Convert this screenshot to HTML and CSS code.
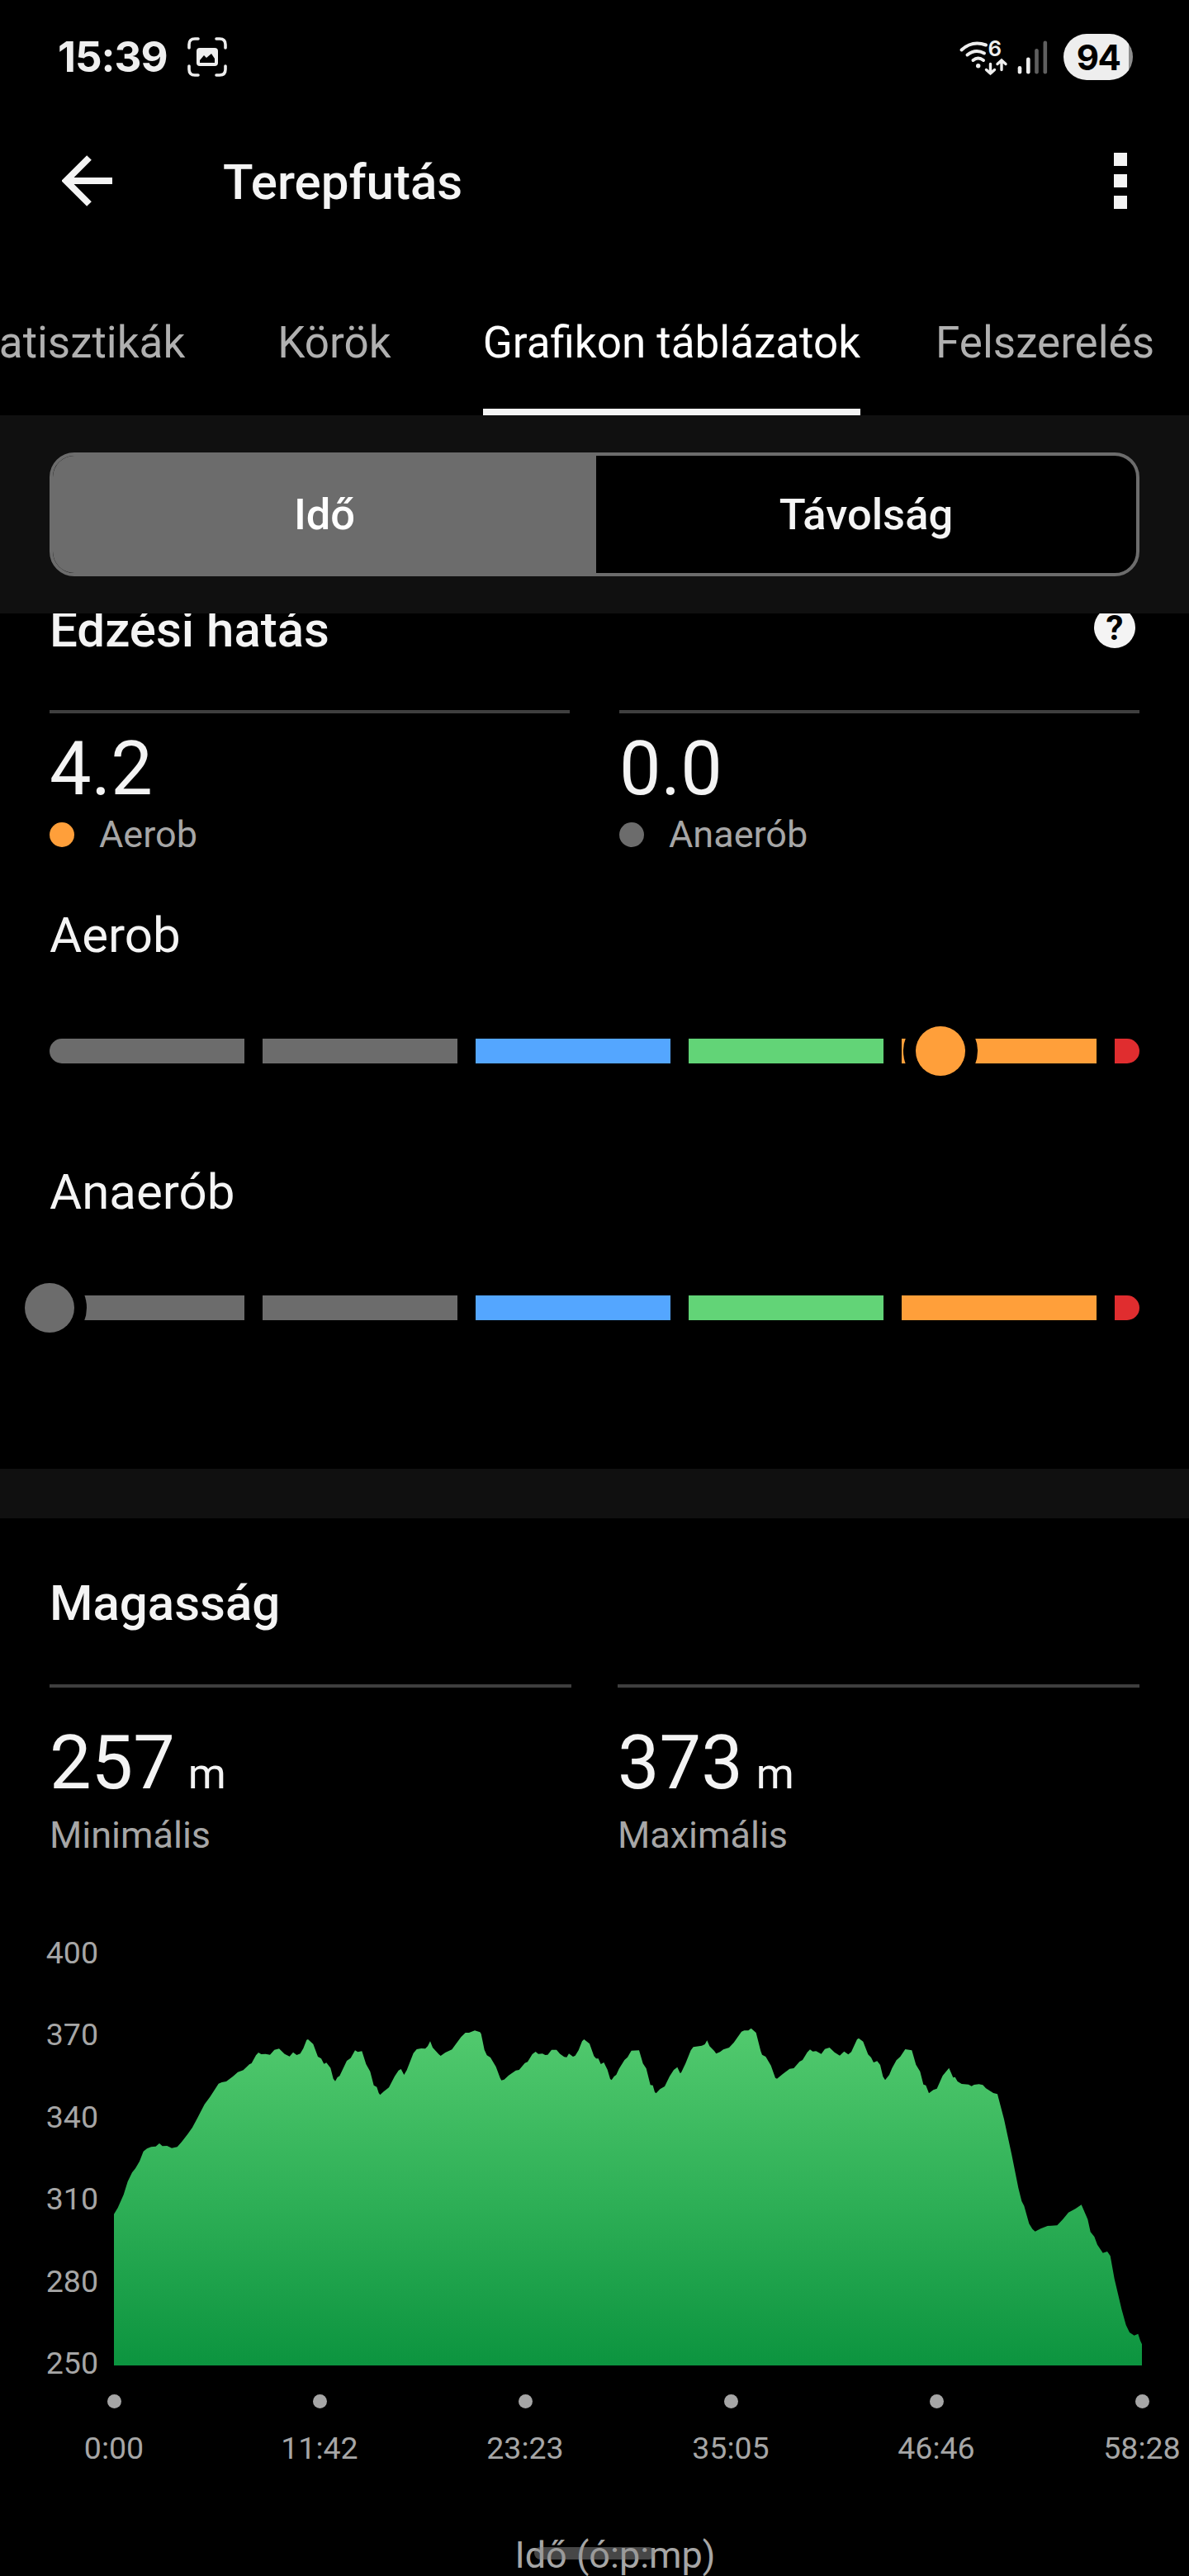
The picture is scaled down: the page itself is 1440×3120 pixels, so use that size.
FILE: index.html
```html
<!doctype html>
<html lang="hu">
  <head>
    <meta charset="UTF-8" />
    <meta name="viewport" content="width=device-width" />
    <title>Terepfutás</title>

    <link rel="stylesheet" href="styles.css">
  </head>

  <body>
    <div class="status-bar">
      <span class="clock">15:39</span>
      <svg class="capture-icon" viewBox="0 0 48 48" aria-hidden="true">
        <path
          d="M2 13V9q0-7 7-7h4M35 2h4q7 0 7 7v4M46 35v4q0 7-7 7h-4M13 46H9q-7 0-7-7v-4"
          fill="none" stroke="currentColor" stroke-width="3.6" stroke-linecap="round"
        />
        <rect x="11" y="13" width="26" height="22" rx="4" fill="currentColor" />
        <path d="M15 31v-3l5-6 3 3 6-5 4 6v5z" fill="#000" />
      </svg>

      <svg class="network-icons" viewBox="0 0 110 56" aria-hidden="true">
        <g fill="none" stroke="currentColor" stroke-width="4" stroke-linecap="round">
          <path d="M4.500 19.500Q17.500 7.500 34 13.500" />
          <path d="M11.500 25.500Q21.500 17.500 32 23.500" />
          <path d="M18.500 32Q24.500 27 31 32" />
          <path d="M39.500 36.500V48M34.500 43.500l5 4.500 5-4.500M53 43.500V33M48 36.500l5-4.500 5 4.500" stroke-width="3.400" />
        </g>
        <circle cx="24.700" cy="38.700" r="2.700" fill="currentColor" />
        <text x="36.500" y="26.500" class="wifi-generation">6</text>
        <g fill="currentColor">
          <rect x="72.700" y="39" width="4.600" height="9.500" rx="2.300" />
          <rect x="83" y="28.500" width="4.600" height="20" rx="2.300" />
          <rect x="93.200" y="18" width="4.600" height="30.500" rx="2.300" opacity=".4" />
          <rect x="103.500" y="8.500" width="4.600" height="40" rx="2.300" opacity=".4" />
        </g>
      </svg>
      <span class="battery">94</span>
    </div>

    <header class="app-bar">
      <svg class="back-icon" viewBox="0 0 62 62" aria-label="Vissza">
        <path
          d="M61 31H6M33 3 5 31l28 28"
          fill="none" stroke="currentColor" stroke-width="8"
        />
      </svg>
      <h1>Terepfutás</h1>
      <svg class="menu-icon" viewBox="0 0 16 68" aria-label="Menü">
        <path d="M0 0h16v16H0zM0 26h16v16H0zM0 52h16v16H0z" fill="currentColor" />
      </svg>
    </header>

    <nav class="tabs">
      <a class="tab">Statisztikák</a>
      <a class="tab">Körök</a>
      <a class="tab tab--active">Grafikon táblázatok</a>
      <a class="tab">Felszerelés</a>
    </nav>

    <div class="switcher">
      <div class="segmented">
        <button class="segment segment--active">Idő</button>
        <button class="segment">Távolság</button>
      </div>
    </div>

    <main>
      <section class="training-effect">
        <div class="section-heading">
          <h2>Edzési hatás</h2>
          <span class="help">?</span>
        </div>

        <div class="stats">
          <div class="stat">
            <p class="value">4.2</p>
            <p class="label"><span class="dot dot--orange"></span>Aerob</p>
          </div>
          <div class="stat">
            <p class="value">0.0</p>
            <p class="label"><span class="dot"></span>Anaerób</p>
          </div>
        </div>

        <h3>Aerob</h3>
        <div class="scale">
          <span></span>
          <span></span>
          <span class="blue"></span>
          <span class="green"></span>
          <span class="orange"></span>
          <span class="red"></span>
          <i class="marker orange" style="left: 81.75%"></i>
        </div>

        <h3 class="second-scale">Anaerób</h3>
        <div class="scale">
          <span></span>
          <span></span>
          <span class="blue"></span>
          <span class="green"></span>
          <span class="orange"></span>
          <span class="red"></span>
          <i class="marker" style="left: 0%"></i>
        </div>
      </section>

      <section class="elevation">
        <h2>Magasság</h2>

        <div class="stats">
          <div class="stat">
            <p class="value">257<small>m</small></p>
            <p class="label">Minimális</p>
          </div>
          <div class="stat">
            <p class="value">373<small>m</small></p>
            <p class="label">Maximális</p>
          </div>
        </div>

        <div class="chart">
          <ol class="y-axis">
            <li>400</li>
            <li>370</li>
            <li>340</li>
            <li>310</li>
            <li>280</li>
            <li>250</li>
          </ol>
          <svg class="plot" viewBox="0 -162 3735 1497" preserveAspectRatio="none">
            <defs>
              <linearGradient id="elevationFill" x1="0" y1="0" x2="0" y2="1">
                <stop offset="0" stop-color="#52ca6e" />
                <stop offset="0.5" stop-color="#2fb057" />
                <stop offset="1" stop-color="#0c943f" />
              </linearGradient>
            </defs>
            <path
              fill="url(#elevationFill)"
              d="M0 1335V785L14 762 35 715 50 667 66 634 78 619 93 593 107 557 120 547 135 541 152 539 165 528 176 538 193 537 210 545 230 541 246 523 268 494 285 470 305 433 329 386 350 358 380 311 392 306 408 303 432 285 450 269 470 262 492 241 500 237 516 208 525 198 535 204 551 203 567 206 583 188 600 184 620 203 638 212 651 197 664 207 677 202 688 183 700 152 705 150 724 167 741 213 753 220 763 239 772 235 787 254 797 293 804 302 812 288 820 283 846 228 860 218 876 190 886 196 901 193 916 240 931 267 944 317 955 323 962 345 967 352 980 340 999 325 1020 284 1034 263 1043 258 1054 279 1064 262 1088 200 1100 186 1116 183 1131 184 1140 175 1149 157 1158 180 1180 204 1187 210 1204 198 1228 187 1240 170 1261 142 1277 126 1290 126 1311 118 1330 124 1334 130 1346 188 1355 208 1368 216 1388 250 1403 290 1408 299 1418 296 1434 281 1460 263 1472 261 1493 236 1503 232 1520 204 1532 195 1542 203 1557 202 1567 207 1576 206 1590 188 1608 188 1621 203 1636 214 1645 215 1653 202 1668 213 1676 209 1688 190 1701 157 1708 150 1728 166 1744 211 1752 220 1760 220 1769 240 1780 234 1793 260 1803 294 1808 298 1817 285 1825 279 1835 257 1855 225 1866 215 1880 191 1908 190 1922 238 1934 256 1949 316 1958 317 1965 342 1970 346 1984 331 2001 321 2019 284 2034 261 2047 251 2057 273 2061 271 2077 237 2096 190 2105 178 2136 173 2147 168 2155 154 2164 175 2181 192 2188 202 2202 196 2214 187 2235 180 2252 162 2280 122 2290 118 2305 118 2315 110 2333 126 2350 193 2355 206 2368 213 2387 245 2403 290 2409 293 2430 276 2455 257 2470 255 2491 231 2502 225 2519 197 2529 187 2539 194 2551 193 2570 203 2583 185 2600 180 2618 197 2637 209 2653 194 2668 205 2679 196 2700 150 2706 146 2722 158 2740 205 2751 216 2760 234 2773 229 2784 243 2794 285 2802 298 2817 279 2827 255 2843 226 2857 213 2875 186 2899 190 2914 242 2929 267 2941 314 2950 317 2961 346 2977 334 2990 329 3011 282 3034 254 3049 289 3056 287 3065 303 3080 312 3105 314 3116 320 3125 315 3143 313 3157 316 3168 328 3195 345 3210 349 3234 440 3262 570 3286 690 3298 738 3307 755 3325 820 3337 839 3347 848 3367 838 3392 828 3427 826 3447 805 3468 779 3493 766 3515 751 3538 804 3548 850 3562 867 3573 896 3593 926 3609 921 3620 937 3635 1020 3661 1130 3677 1188 3690 1215 3707 1226 3721 1220 3729 1245 3735 1258V1335Z"
            />
          </svg>
        </div>

        <ol class="x-axis">
          <li>0:00</li>
          <li>11:42</li>
          <li>23:23</li>
          <li>35:05</li>
          <li>46:46</li>
          <li>58:28</li>
        </ol>
        <p class="axis-title">Idő (ó:p:mp)</p>
      </section>
    </main>

    <div class="home-indicator"></div>
  </body>
</html>
```

FILE: styles.css
```css
* {
  box-sizing: border-box;
  margin: 0;
  padding: 0;
}

:root {
  --background-color: #000;
  --surface-color: #101010;
  --foreground-color: #f4f4f4;
  --muted-color: #a6a6a6;
  --grey: #6c6c6c;
  --line-color: #3f3f3f;
  --blue: #54a6ff;
  --green: #62d477;
  --orange: #ff9f3a;
  --red: #e02d2f;
}

body {
  position: relative;
  width: 1440px;
  height: 3120px;
  overflow: hidden;
  background-color: var(--background-color);
  color: var(--foreground-color);
  font-family: Roboto, sans-serif;
  font-size: 60px;
  line-height: 70px;
}

ol {
  list-style: none;
}

h1,
h2 {
  font-size: 60px;
  font-weight: 500;
}

h3 {
  margin: 60px 0 90px;
  font-size: 60px;
  font-weight: 400;
}

.status-bar {
  display: flex;
  align-items: center;
  height: 138px;
  padding: 0 68px 0 70px;
  color: #eee;
  font-family: Inter, sans-serif;
  font-weight: 700;
}

.clock {
  width: 157px;
  font-size: 51px;
  letter-spacing: -1px;
}

.capture-icon {
  width: 48px;
  height: 48px;
}

.network-icons {
  width: 110px;
  height: 56px;
  margin-left: auto;
  margin-right: 18px;
}

.wifi-generation {
  fill: currentColor;
  font-size: 26px;
  font-weight: 600;
}

.battery {
  width: 84px;
  height: 56px;
  border-radius: 28px;
  background: linear-gradient(to right, #eee 79px, #8e8e8e 79px);
  color: #000;
  font-size: 42px;
  line-height: 57px;
  letter-spacing: -1.500px;
  text-align: center;
}

.app-bar {
  display: flex;
  align-items: center;
  height: 162px;
  padding: 0 75px;
}

.back-icon {
  width: 62px;
  height: 62px;
}

.app-bar h1 {
  padding: 4px 0 0 133px;
}

.menu-icon {
  width: 16px;
  height: 68px;
  margin-left: auto;
}

.tabs {
  display: flex;
  height: 203px;
  margin-left: -50px;
}

.tab {
  flex: none;
  margin-right: 111px;
  padding-top: 80px;
  color: #b0b0b0;
  font-size: 53px;
}

.tab:first-child {
  margin-right: 112px;
}

.tab--active {
  margin-right: 91px;
  border-bottom: 8px solid var(--foreground-color);
  color: #fff;
}

.switcher {
  height: 240px;
  padding: 45px 60px;
  background-color: var(--surface-color);
}

.segmented {
  display: flex;
  height: 150px;
  border: 4px solid var(--grey);
  border-radius: 30px;
  background-color: #000;
  overflow: hidden;
}

.segment {
  flex: 1;
  border: 0;
  background: none;
  color: var(--foreground-color);
  font: 500 52.500px Roboto, sans-serif;
}

.segment--active {
  flex: 0 0 658px;
  background-color: var(--grey);
  color: #fff;
}

.training-effect {
  height: 1036px;
  padding: 0 60px;
  overflow: hidden;
}

/* scrolled partly under the switcher */
.section-heading {
  display: flex;
  justify-content: space-between;
  align-items: center;
  margin: -15px 0 62px;
}

.help {
  width: 50px;
  height: 50px;
  margin: -6px 5px 0 0;
  border-radius: 50%;
  background-color: var(--foreground-color);
  color: #000;
  font-size: 42px;
  font-weight: 700;
  line-height: 51px;
  text-align: center;
}

.stats {
  display: grid;
  grid-template-columns: 1fr 1fr;
  gap: 60px;
}

.stat {
  border-top: 4px solid var(--line-color);
  padding-top: 23px;
}

.value {
  font-size: 90px;
  line-height: 90px;
}

.value small {
  margin-left: 16px;
  font-size: 52.500px;
  line-height: 1;
}

.label {
  display: flex;
  align-items: center;
  margin-top: 7px;
  color: var(--muted-color);
  font-size: 45px;
  line-height: 54px;
}

.dot {
  width: 30px;
  height: 30px;
  margin-right: 30px;
  border-radius: 50%;
  background-color: var(--grey);
}

.dot--orange {
  background-color: var(--orange);
}

.scale {
  position: relative;
  display: grid;
  grid-template-columns: repeat(5, 235.500px) 1fr;
  gap: 22.500px;
  height: 30px;
}

.scale span {
  background-color: var(--grey);
}

.scale span:first-child {
  border-radius: 15px 0 0 15px;
}

.scale .blue {
  background-color: var(--blue);
}

.scale .green {
  background-color: var(--green);
}

.scale .orange {
  background-color: var(--orange);
}

.scale .red {
  border-radius: 0 15px 15px 0;
  background-color: var(--red);
}

.marker {
  position: absolute;
  top: -15px;
  width: 60px;
  height: 60px;
  margin-left: -30px;
  border-radius: 50%;
  background-color: var(--grey);
  box-shadow: 0 0 0 15px var(--background-color);
}

.second-scale {
  margin-top: 121px;
}

.elevation {
  border-top: 60px solid var(--surface-color);
  padding-top: 68px;
}

.elevation h2 {
  margin: 0 60px 63px;
}

.elevation .stats {
  gap: 56px;
  margin: 0 60px;
}

.elevation .stat {
  padding-top: 47px;
}

.elevation .label {
  margin-top: 15px;
}

.chart {
  display: flex;
  gap: 19px;
  height: 499px;
  margin-top: 116px;
}

.y-axis {
  width: 119px;
  margin-top: -50px;
  color: var(--muted-color);
  font-size: 37.500px;
  line-height: 99.400px;
  text-align: right;
}

.plot {
  width: 1245px;
  height: 499px;
}

.x-axis {
  display: flex;
  width: 1494px;
  margin: 35px 0 81px 13.500px;
  color: var(--muted-color);
  font-size: 37.500px;
  line-height: 44px;
  text-align: center;
}

.x-axis li {
  width: 249px;
}

.x-axis li::before {
  content: "";
  display: block;
  width: 17px;
  height: 17px;
  margin: 0 auto 26px;
  border-radius: 50%;
  background-color: var(--muted-color);
}

.axis-title {
  padding-left: 50px;
  color: var(--muted-color);
  font-size: 45px;
  line-height: 54px;
  text-align: center;
}

.home-indicator {
  position: absolute;
  left: 647px;
  bottom: 20px;
  width: 146px;
  height: 15px;
  border-radius: 8px;
  background-color: rgb(142 142 142 / 50%);
}
```
